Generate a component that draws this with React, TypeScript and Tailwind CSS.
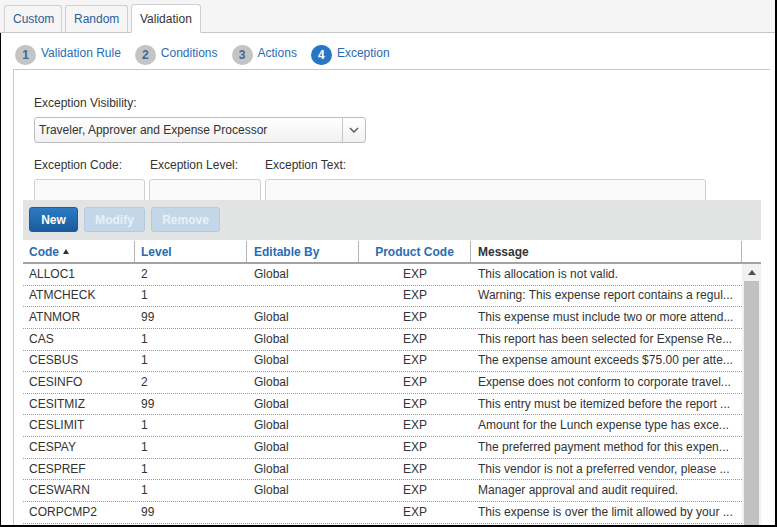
import React from "react";

const rows: [string, string, string, string, string][] = [
  ["ALLOC1", "2", "Global", "EXP", "This allocation is not valid."],
  ["ATMCHECK", "1", "", "EXP", "Warning: This expense report contains a regul..."],
  ["ATNMOR", "99", "Global", "EXP", "This expense must include two or more attend..."],
  ["CAS", "1", "Global", "EXP", "This report has been selected for Expense Re..."],
  ["CESBUS", "1", "Global", "EXP", "The expense amount exceeds $75.00 per atte..."],
  ["CESINFO", "2", "Global", "EXP", "Expense does not conform to corporate travel..."],
  ["CESITMIZ", "99", "Global", "EXP", "This entry must be itemized before the report ..."],
  ["CESLIMIT", "1", "Global", "EXP", "Amount for the Lunch expense type has exce..."],
  ["CESPAY", "1", "Global", "EXP", "The preferred payment method for this expen..."],
  ["CESPREF", "1", "Global", "EXP", "This vendor is not a preferred vendor, please ..."],
  ["CESWARN", "1", "Global", "EXP", "Manager approval and audit required."],
  ["CORPCMP2", "99", "", "EXP", "This expense is over the limit allowed by your ..."],
];

function Step({ n, label, active }: { n: string; label: string; active?: boolean }) {
  return (
    <div className="flex items-center gap-[5px]">
      <div
        className={
          active
            ? "w-[21px] h-[20px] rounded-full bg-[#2877c6] text-white font-bold text-[12px] flex items-center justify-center mt-[3px]"
            : "w-[21px] h-[20px] rounded-full bg-[#c4c4c4] text-[#3b6a9c] font-bold text-[12px] flex items-center justify-center mt-[3px]"
        }
      >
        {n}
      </div>
      <span className="text-[#2a6cb2] text-[12px]">{label}</span>
    </div>
  );
}

export default function App() {
  return (
    <div className="w-[777px] h-[527px] overflow-hidden bg-white border-r-2 border-b-2 border-black flex flex-col font-['Liberation_Sans',Arial,sans-serif] text-[12px] text-[#333]">
      {/* tab bar */}
      <div className="h-[33px] shrink-0 bg-[#f5f5f5] border-b border-[#c6c6c6] flex items-end pl-[4px]">
        <div className="h-[28px] w-[58px] mb-[-1px] border border-[#cfcfcf] border-b-[#c6c6c6] rounded-t-[3px] bg-[#f5f5f5] pl-[8px] flex items-center text-[#2a5f97]">
          Custom
        </div>
        <div className="h-[28px] w-[63px] ml-[3px] mb-[-1px] border border-[#cfcfcf] border-b-[#c6c6c6] rounded-t-[3px] bg-[#f5f5f5] pl-[8px] flex items-center text-[#2a5f97]">
          Random
        </div>
        <div className="h-[29px] w-[70px] ml-[3px] mb-[-1px] border border-[#cfcfcf] border-b-white rounded-t-[3px] bg-white pl-[8px] flex items-center text-[#333]">
          Validation
        </div>
      </div>

      {/* content */}
      <div className="flex-1 flex flex-col border-l border-black pl-[12px] pr-[5px] min-h-0">
        <div className="h-[36px] shrink-0 flex items-center pl-[2px] pt-[4px] gap-[14px]">
          <Step n="1" label="Validation Rule" />
          <Step n="2" label="Conditions" />
          <Step n="3" label="Actions" />
          <Step n="4" label="Exception" active />
        </div>
        <div className="flex-1 border-t border-l border-[#c8c8c8] flex flex-col min-h-0">
          {/* form */}
          <div className="h-[130px] shrink-0 overflow-hidden pl-[20px]">
            <div className="mt-[26px] leading-[14px]">Exception Visibility:</div>
            <div className="mt-[7px] w-[332px] h-[26px] border border-[#bdbdbd] rounded-[3px] bg-gradient-to-b from-white to-[#f1f1f1] flex items-stretch">
              <div className="flex-1 flex items-center pl-[4px]">Traveler, Approver and Expense Processor</div>
              <div className="w-[23px] border-l border-[#c8c8c8] flex items-center justify-center">
                <svg width="10" height="6" viewBox="0 0 10 6">
                  <path d="M1 1 L5 5 L9 1" fill="none" stroke="#555" strokeWidth="1.4" />
                </svg>
              </div>
            </div>
            <div className="mt-[15px] flex leading-[14px]">
              <div className="w-[116px]">Exception Code:</div>
              <div className="w-[115px]">Exception Level:</div>
              <div>Exception Text:</div>
            </div>
            <div className="mt-[7px] flex gap-[4px]">
              <div className="w-[111px] h-[30px] border border-[#d0d0d0] rounded-[3px] bg-[#fafafa]" />
              <div className="w-[112px] h-[30px] border border-[#d0d0d0] rounded-[3px] bg-[#fafafa]" />
              <div className="w-[441px] h-[30px] border border-[#d0d0d0] rounded-[3px] bg-[#fafafa]" />
            </div>
          </div>

          {/* grid */}
          <div className="ml-[9px] w-[738px] flex-1 flex flex-col min-h-0">
            <div className="h-[40px] shrink-0 bg-[#e2e3e3] flex items-center pl-[6px] gap-[6px] pb-[1px]">
              <div className="w-[49px] h-[25px] rounded-[3px] bg-gradient-to-b from-[#2c7bc4] to-[#1a5c9c] border border-[#1b5c98] text-white font-bold flex items-center justify-center">
                New
              </div>
              <div className="w-[61px] h-[25px] rounded-[3px] bg-[#c3d7e9] border border-[#b0cbe3] text-[#e9f0f7] font-bold flex items-center justify-center">
                Modify
              </div>
              <div className="w-[69px] h-[25px] rounded-[3px] bg-[#c3d7e9] border border-[#b0cbe3] text-[#e9f0f7] font-bold flex items-center justify-center">
                Remove
              </div>
            </div>
            {/* header */}
            <div className="h-[24px] shrink-0 flex border-b-2 border-[#a3a3a3] font-bold text-[#2a6cb2] pt-[1px]">
              <div className="w-[112px] pl-[6px] flex items-center border-r border-[#b5b5b5]">
                Code
                <svg width="6" height="5" viewBox="0 0 6 5" className="ml-[4px]">
                  <path d="M0 5 L3 0 L6 5 Z" fill="#333" />
                </svg>
              </div>
              <div className="w-[112px] pl-[6px] flex items-center border-r border-[#b5b5b5]">Level</div>
              <div className="w-[112px] pl-[7px] flex items-center border-r border-[#b5b5b5]">Editable By</div>
              <div className="w-[112px] flex items-center justify-center border-r border-[#b5b5b5]">Product Code</div>
              <div className="w-[271px] pl-[7px] flex items-center border-r border-[#b5b5b5] text-[#333]">Message</div>
              <div className="flex-1" />
            </div>
            {/* body */}
            <div className="flex-1 flex min-h-0 overflow-hidden">
              <div className="w-[719px] flex flex-col">
                {rows.map((r) => (
                  <div key={r[0]} className="h-[21.65px] shrink-0 flex items-center pb-[1px] border-b border-dotted border-[#9a9a9a]">
                    <div className="w-[112px] pl-[6px]">{r[0]}</div>
                    <div className="w-[112px] pl-[6px]">{r[1]}</div>
                    <div className="w-[112px] pl-[7px]">{r[2]}</div>
                    <div className="w-[112px] text-center">{r[3]}</div>
                    <div className="w-[271px] pl-[7px] whitespace-nowrap overflow-hidden">{r[4]}</div>
                  </div>
                ))}
              </div>
              <div className="w-[19px] bg-[#f1f1f1] flex flex-col">
                <div className="h-[17px] flex items-center justify-center">
                  <svg width="8" height="5" viewBox="0 0 8 5">
                    <path d="M0 5 L4 0 L8 5 Z" fill="#505050" />
                  </svg>
                </div>
                <div className="flex-1 mx-[2px] bg-[#c1c1c1]" />
              </div>
            </div>
          </div>
        </div>
      </div>
    </div>
  );
}
